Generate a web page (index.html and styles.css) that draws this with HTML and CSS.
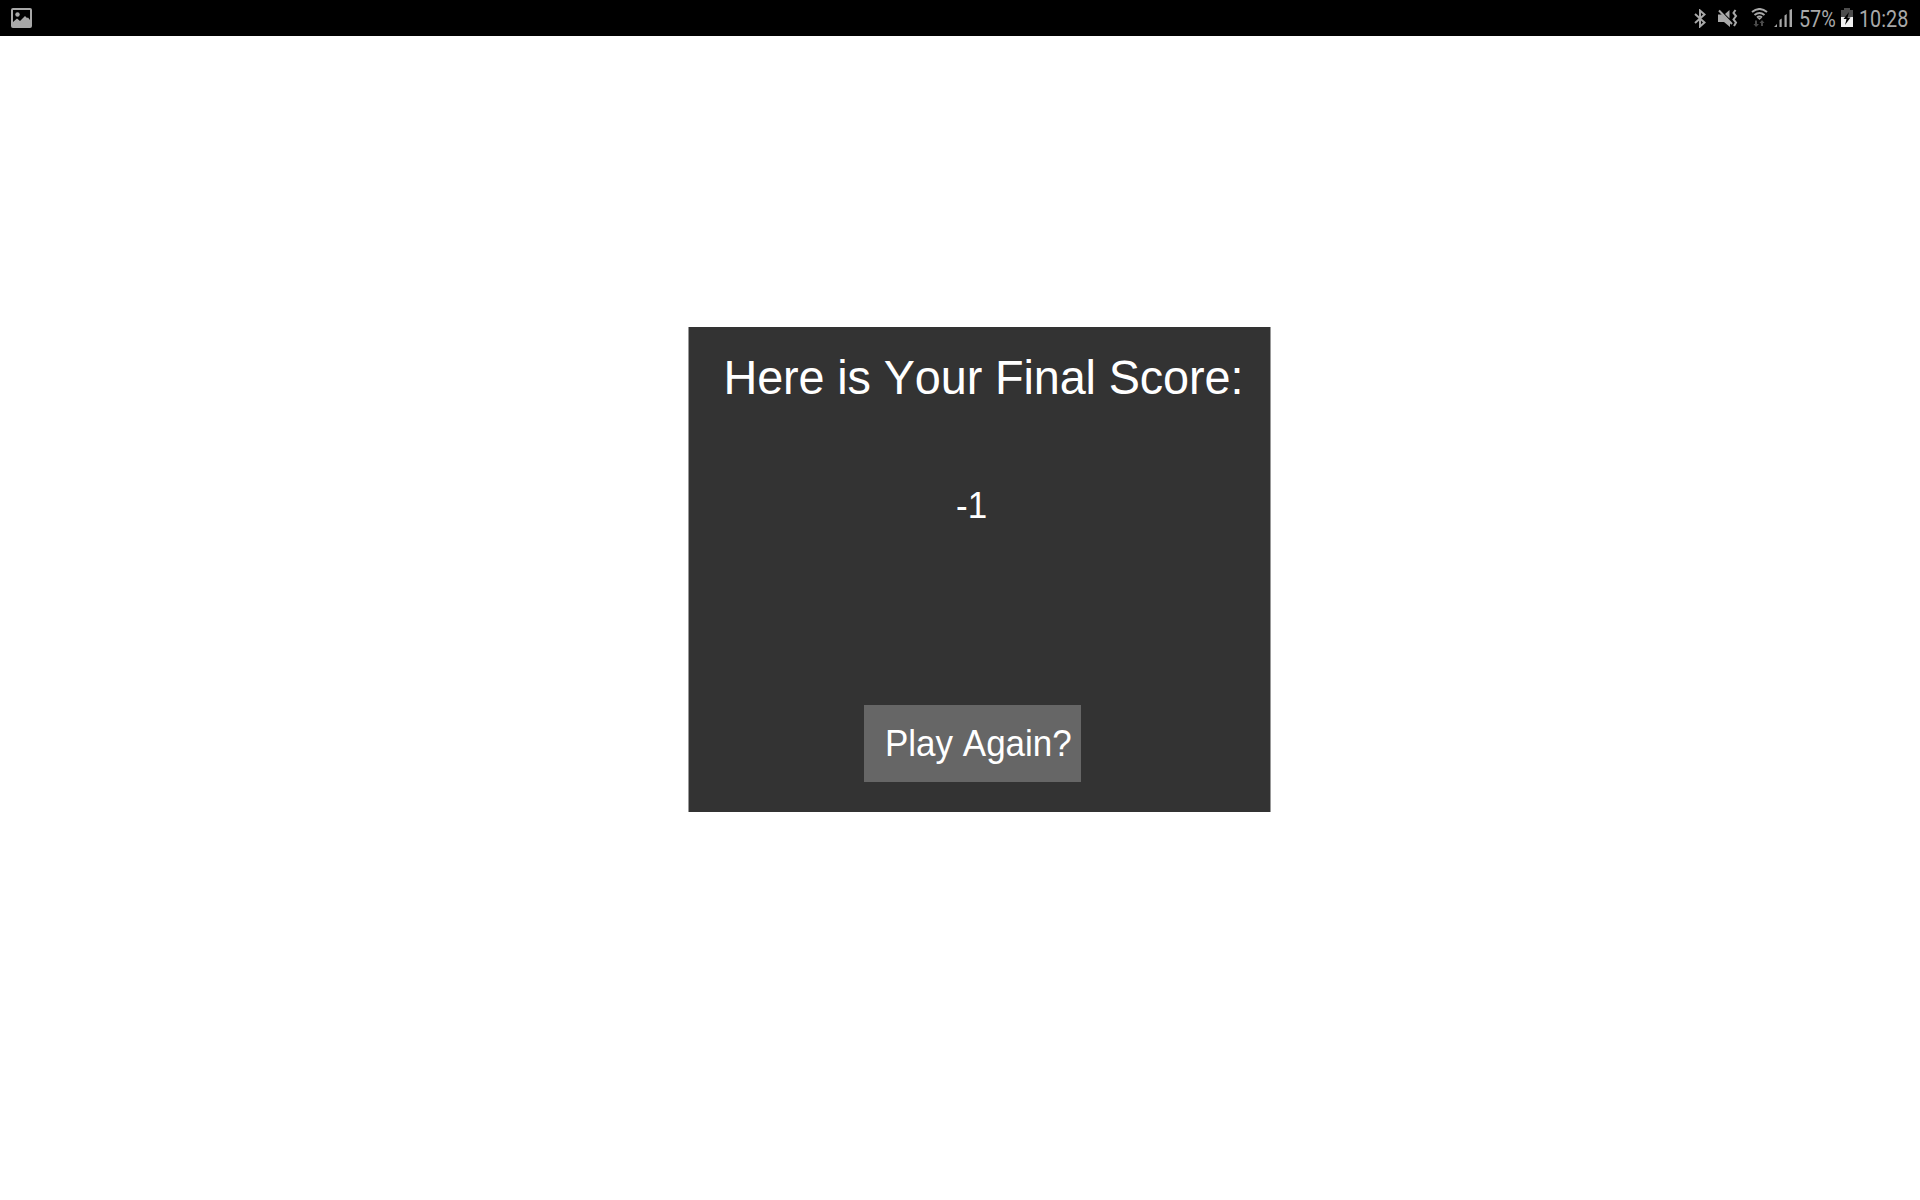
FILE: index.html
```html
<!DOCTYPE html>
<html lang="en">
<head>
<meta charset="utf-8">
<title>Final Score</title>
<link rel="stylesheet" href="styles.css">
</head>
<body>
<header class="status-bar">
  <svg class="icon-picture" width="21" height="20" viewBox="0 0 21 20"><path fill-rule="evenodd" d="M2 0H19Q21 0 21 2V18Q21 20 19 20H2Q0 20 0 18V2Q0 0 2 0ZM2 2V14L6 10.500L9 13L14 8L16 10L17 9.500L19 12V2Z"/><circle cx="6.500" cy="6.500" r="2.200"/></svg>
  <div class="status-right">
    <svg class="icon-bluetooth" width="12" height="19" viewBox="0 0 12 19"><path d="M1 5L10.500 13.500L6 17.500V1.500L10.500 5.500L1 14"/></svg>
    <svg class="icon-mute" width="20" height="19" viewBox="0 0 20 19"><path d="M0 5.500H4L12 13V18L6 13H0ZM7 5L11.500 1V9.500Z"/><path class="line" d="M1 1.500L14 15M17.500 1L15.500 4L18 7L15.500 10.500L18 13.500L16 17"/></svg>
    <svg class="icon-wifi" width="17" height="20" viewBox="0 0 17 20"><path class="line" d="M1 4Q8.500 -2 16 4M3.500 7Q8.500 3 13.500 7M6 9.500Q8.500 7.500 11 9.500"/><path d="M6.500 10H10.500L8.500 12Z"/><path class="traffic" d="M4 12.500H6V16H8L5 19L2.500 16H4ZM10 18V15H8.500L11 12L13.500 15H12V18Z"/></svg>
    <svg class="icon-signal" width="18" height="18" viewBox="0 0 18 18"><path d="M0 18L3 15V18ZM5.500 18V11L7.700 9.500V18ZM10.500 18V6.500L12.700 5V18ZM15.500 18V1L18 0V18Z"/></svg>
    <span class="battery-level">57%</span>
    <svg class="icon-battery" width="12" height="19" viewBox="0 0 12 19"><path class="empty" d="M0 2H3V0H9V2H12V9H0Z"/><path class="full" d="M0 9H12V19H0Z"/><path class="bolt" d="M8 4L2.500 11H5.500L4 17L9.500 9.500H6.500Z"/></svg>
    <span class="clock">10:28</span>
  </div>
</header>
<main class="stage">
  <section class="panel">
    <h1 class="title">Here is Your Final Score:</h1>
    <p class="score">-1</p>
    <button class="play-again" type="button"><span class="play-label">Play Again?</span></button>
  </section>
</main>
</body>
</html>
```
FILE: styles.css
```css
body {
  margin: 0;
  height: 1200px;
  overflow: hidden;
  background: #fff;
  font-family: "Liberation Sans", Arial, sans-serif;
}
.status-bar {
  box-sizing: border-box;
  height: 36px;
  padding: 0 11px;
  display: flex;
  justify-content: space-between;
  background: #000;
  color: #a8a8a8;
  fill: #a8a8a8;
}
.status-bar svg { display: block; flex: none; }
.icon-picture { margin-top: 8px; }
.status-right {
  display: flex;
  font: 23px/36px Roboto, sans-serif;
}
.battery-level, .clock {
  transform: scaleX(.86);
  transform-origin: left;
  white-space: nowrap;
  margin-top: 2px;
}
.battery-level { width: 42px; }
.clock { width: 50px; }
.status-right .icon-bluetooth { margin: 9px 12px 0 0; fill: none; stroke: #a8a8a8; stroke-width: 2; }
.icon-mute { margin: 9px 13px 0 0; }
.icon-wifi { margin: 8px 6px 0 0; }
.icon-signal { margin: 9px 7px 0 0; }
.icon-battery { margin: 8px 6px 0 0; }
.line { fill: none; stroke: #a8a8a8; stroke-width: 2; }
.traffic { fill: #4a4a4a; }
.empty { fill: #4d4d4d; }
.full { fill: #f0f0f0; }
.bolt { fill: #000; }
.stage {
  display: flex;
  padding: 291px 0 0 688px;
}
.panel {
  box-sizing: border-box;
  width: 583px;
  height: 485px;
  border: solid #999;
  border-width: 0 1px;
  background: #333;
  color: #fff;
  display: flex;
  flex-direction: column;
  align-items: flex-start;
}
.title, .score, .play-label {
  font-kerning: none;
  transform: scaleY(1.04);
}
.title {
  margin: 22.5px 0 0 34.5px;
  font-size: 46.8px;
  letter-spacing: -.12px;
  line-height: 54px;
  font-weight: 400;
  white-space: nowrap;
}
.score {
  margin: 82px 0 0 267px;
  font-size: 35px;
  line-height: 40px;
}
.play-again {
  box-sizing: border-box;
  width: 217px;
  height: 77px;
  margin: 179.5px 0 0 175px;
  padding: 0 0 0 21px;
  border: 0;
  background: #666;
  color: #fff;
  font: 35px/40px "Liberation Sans", Arial, sans-serif;
  text-align: left;
  white-space: nowrap;
}
.play-label { display: block; }
```
